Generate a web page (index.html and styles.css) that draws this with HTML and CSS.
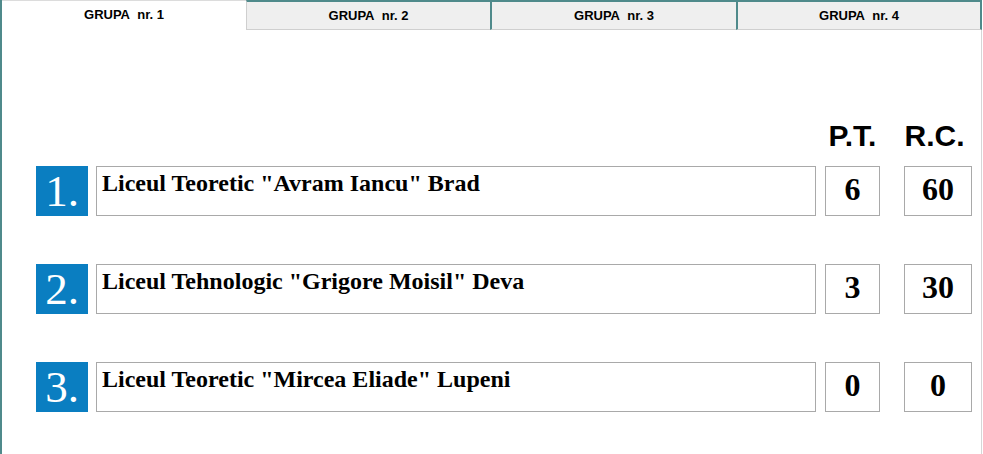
FILE: index.html
```html
<!DOCTYPE html>
<html lang="ro">
<head>
  <meta charset="UTF-8">
  <title>Clasament grupe</title>
  <link rel="stylesheet" href="styles.css">
</head>
<body>
  <div class="frame">
    <div class="tabs">
      <div class="tab active">GRUPA&nbsp; nr. 1</div>
      <div class="tab first-off">GRUPA&nbsp; nr. 2</div>
      <div class="tab">GRUPA&nbsp; nr. 3</div>
      <div class="tab last">GRUPA&nbsp; nr. 4</div>
    </div>

    <div class="content">
      <div class="row head">
        <div class="rank-col"></div>
        <div class="name-col"></div>
        <div class="pt-col label">P.T.</div>
        <div class="rc-col label rc-label">R.C.</div>
      </div>

      <div class="row team">
        <div class="rank-col rank">1.</div>
        <div class="name-col name">Liceul Teoretic "Avram Iancu" Brad</div>
        <div class="pt-col score">6</div>
        <div class="rc-col score">60</div>
      </div>

      <div class="row team">
        <div class="rank-col rank">2.</div>
        <div class="name-col name">Liceul Tehnologic "Grigore Moisil" Deva</div>
        <div class="pt-col score">3</div>
        <div class="rc-col score">30</div>
      </div>

      <div class="row team">
        <div class="rank-col rank">3.</div>
        <div class="name-col name">Liceul Teoretic "Mircea Eliade" Lupeni</div>
        <div class="pt-col score">0</div>
        <div class="rc-col score">0</div>
      </div>
    </div>
  </div>
</body>
</html>
```

FILE: styles.css
```css
* {
  box-sizing: border-box;
}

body {
  margin: 0;
  background: #fff;
  font-family: "Liberation Serif", "Times New Roman", serif;
  color: #000;
}

.frame {
  width: 982px;
  height: 454px;
  border-left: 2px solid #4f8a8b;
  border-right: 1px solid #d6d6d6;
}

/* tab strip */
.tabs {
  display: flex;
  height: 30px;
  margin-right: -1px;
}

.tab {
  width: 246px;
  height: 30px;
  padding-top: 2px;
  background: #efefef;
  border-top: 2px solid #4f8a8b;
  border-left: 2px solid #4f8a8b;
  border-bottom: 1px solid #cfcfcf;
  font-family: "Liberation Sans", Arial, sans-serif;
  font-weight: bold;
  font-size: 13px;
  line-height: 24px;
  text-align: center;
}

.tab.active {
  width: 244px;
  padding-top: 0;
  background: #fff;
  border-top: 1px solid #dcdcdc;
  border-left: none;
  border-bottom: none;
  line-height: 27px;
}

.tab.first-off {
  width: 244px;
  border-left: 1px solid #cfcfcf;
}

.tab.last {
  flex: 1;
  border-right: 2px solid #4f8a8b;
}

/* table */
.content {
  padding: 90px 0 0 34px;
}

.row {
  display: flex;
}

.rank-col {
  width: 52px;
}

.name-col {
  width: 720px;
  margin-left: 8px;
}

.pt-col {
  width: 55px;
  margin-left: 9px;
}

.rc-col {
  width: 68px;
  margin-left: 24px;
}

.head {
  height: 46px;
}

.label {
  font-family: "Liberation Sans", Arial, sans-serif;
  font-weight: bold;
  font-size: 30px;
  line-height: 32px;
  text-align: center;
}

.rc-label {
  padding-right: 7px;
}

.team {
  height: 50px;
  margin-bottom: 48px;
}

.rank {
  background: #0a7ec1;
  color: #fff;
  font-size: 45px;
  line-height: 50px;
  text-align: center;
}

.name {
  border: 1px solid #a9a9a9;
  padding: 3px 5px;
  font-weight: bold;
  font-size: 24px;
  line-height: 26px;
}

.score {
  border: 1px solid #a9a9a9;
  padding-bottom: 3px;
  font-weight: bold;
  font-size: 32px;
  line-height: 45px;
  text-align: center;
}
```
